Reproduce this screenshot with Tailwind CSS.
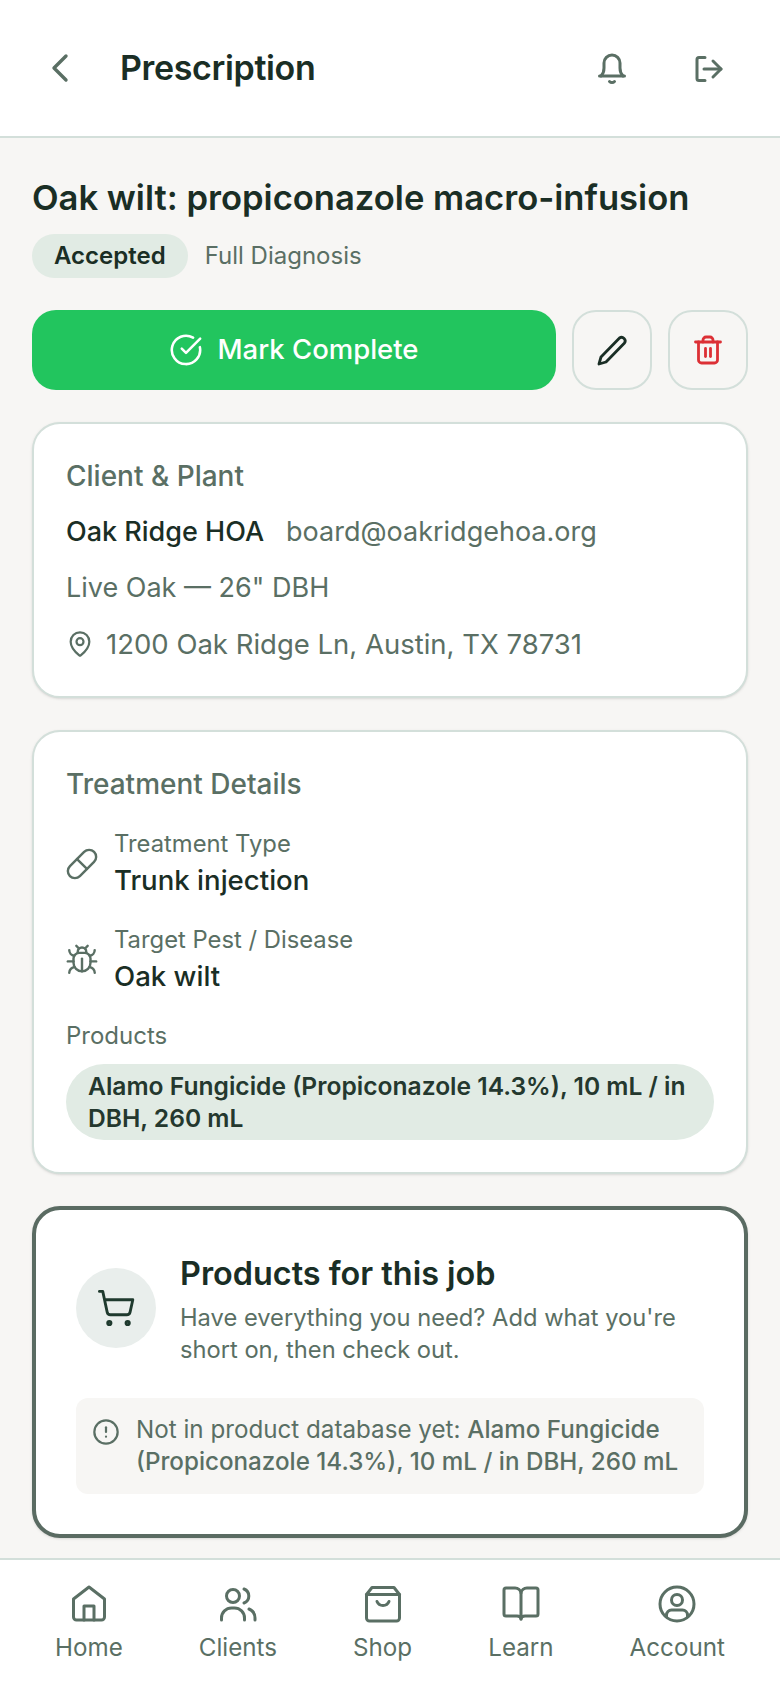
<!DOCTYPE html>
<html lang="en">
<head>
  <meta charset="UTF-8">
  <meta name="viewport" content="width=device-width, initial-scale=1.0">
  <title>Prescription</title>
  <script src="https://cdn.jsdelivr.net/npm/@tailwindcss/browser@4"></script>
</head>
<body class="font-['Inter',sans-serif] bg-[#f7f6f4] text-[#1a2e25] w-[780px] h-[1688px] flex flex-col overflow-hidden">

  <!-- header -->
  <header class="h-[138px] shrink-0 bg-white border-b-2 border-[#d3dfda] flex items-center pl-[38px] pr-[50px]">
    <svg class="w-[44px] h-[44px] text-[#5a6f64]" viewBox="0 0 44 44" fill="none" stroke="currentColor" stroke-width="3.4" stroke-linecap="round" stroke-linejoin="round"><path d="M28 10 16 22l12 12"/></svg>
    <h1 class="ml-[38px] text-[34px] leading-[48px] font-semibold tracking-[-0.35px] flex-1">Prescription</h1>
    <div class="flex gap-[52px]">
      <svg class="w-[44px] h-[44px] text-[#5a6f64]" viewBox="0 0 44 44" fill="none" stroke="currentColor" stroke-width="3" stroke-linecap="round" stroke-linejoin="round"><path d="M11 30c2-2 3-4 3-8v-5a8 8 0 0 1 16 0v5c0 4 1 6 3 8"/><path d="M9.5 30h25"/><path d="M19.5 35.5a3.5 3.5 0 0 0 5 0"/></svg>
      <svg class="w-[44px] h-[44px] text-[#5a6f64]" viewBox="0 0 44 44" fill="none" stroke="currentColor" stroke-width="3" stroke-linecap="round" stroke-linejoin="round"><path d="M19 11.5h-6a2 2 0 0 0-2 2v19a2 2 0 0 0 2 2h6"/><path d="M18 23h17"/><path d="m27 15 8 8-8 8"/></svg>
    </div>
  </header>

  <main class="flex-1 overflow-hidden px-[32px] pt-[35px]">
    <h2 class="text-[34.6px] leading-[48px] font-semibold whitespace-nowrap">Oak wilt: propiconazole macro-infusion</h2>
    <div class="mt-[13px] flex items-center gap-[17px]">
      <span class="h-[44px] px-[22px] rounded-full bg-[#e1ebe4] text-[24px] leading-[44px] font-semibold">Accepted</span>
      <span class="text-[24px] leading-[32px] text-[#5a6f64]">Full Diagnosis</span>
    </div>

    <div class="mt-[32px] flex gap-[16px]">
      <button class="flex-1 h-[80px] rounded-[24px] bg-[#22c55e] text-white flex items-center justify-center gap-[14px] text-[27.5px] font-medium">
        <svg class="w-[34px] h-[34px]" viewBox="0 0 24 24" fill="none" stroke="currentColor" stroke-width="1.8" stroke-linecap="round" stroke-linejoin="round"><path d="M21.8 10A10 10 0 1 1 17 3.3"/><path d="m9 11 3 3L22 4"/></svg>
        Mark Complete
      </button>
      <button class="w-[80px] h-[80px] rounded-[24px] border-2 border-[#d3dfda] flex items-center justify-center">
        <svg class="w-[32px] h-[32px] text-[#1a2e25]" viewBox="0 0 32 32" fill="none" stroke="currentColor" stroke-width="2.8" stroke-linecap="round" stroke-linejoin="round"><path d="M23.5 4a3.6 3.6 0 0 1 5 5L10 28l-7 2 2-7z"/></svg>
      </button>
      <button class="w-[80px] h-[80px] rounded-[24px] border-2 border-[#d3dfda] flex items-center justify-center">
        <svg class="w-[32px] h-[32px] text-[#dc3035]" viewBox="0 0 32 32" fill="none" stroke="currentColor" stroke-width="2.8" stroke-linecap="round" stroke-linejoin="round"><path d="M3.5 8h25"/><path d="M6.5 8v18a3 3 0 0 0 3 3h13a3 3 0 0 0 3-3V8"/><path d="M11 8V6a3 3 0 0 1 3-3h4a3 3 0 0 1 3 3v2"/><path d="M13.5 14.5v8"/><path d="M18.5 14.5v8"/></svg>
      </button>
    </div>

    <!-- client -->
    <section class="mt-[32px] bg-white border-2 border-[#d3dfda] rounded-[28px] shadow-sm p-[32px] flex flex-col gap-[16px] text-[27px] leading-[40px] text-[#5a6f64]">
      <h3 class="font-medium text-[#5a6f64] text-[28px]">Client &amp; Plant</h3>
      <p class="flex gap-[22px]"><span class="font-medium text-[#1a2e25]">Oak Ridge HOA</span><span>board@oakridgehoa.org</span></p>
      <p>Live Oak — 26" DBH</p>
      <p class="flex items-center gap-[12px] text-[27.5px]">
        <svg class="w-[28px] h-[28px]" viewBox="0 0 24 24" fill="none" stroke="currentColor" stroke-width="1.9" stroke-linecap="round" stroke-linejoin="round"><path d="M20 10c0 5-5.5 10.2-7.4 11.8a1 1 0 0 1-1.2 0C9.5 20.2 4 15 4 10a8 8 0 0 1 16 0"/><circle cx="12" cy="10" r="3"/></svg>
        1200 Oak Ridge Ln, Austin, TX 78731
      </p>
    </section>

    <!-- treatment -->
    <section class="mt-[32px] bg-white border-2 border-[#d3dfda] rounded-[28px] shadow-sm p-[32px]">
      <h3 class="font-medium text-[#5a6f64] text-[28px] leading-[40px]">Treatment Details</h3>
      <div class="mt-[24px] flex items-center gap-[15px] -ml-[1px]">
        <svg class="w-[34px] h-[34px] text-[#5a6f64]" viewBox="0 0 24 24" fill="none" stroke="currentColor" stroke-width="1.7" stroke-linecap="round" stroke-linejoin="round"><path d="m10.5 20.5 10-10a4.95 4.95 0 1 0-7-7l-10 10a4.95 4.95 0 1 0 7 7Z"/><path d="m8.5 8.5 7 7"/></svg>
        <div>
          <p class="text-[23.8px] leading-[32px] text-[#5a6f64]">Treatment Type</p>
          <p class="text-[27.6px] leading-[40px] font-medium">Trunk injection</p>
        </div>
      </div>
      <div class="mt-[24px] flex items-center gap-[15px] -ml-[1px]">
        <svg class="w-[34px] h-[34px] text-[#5a6f64]" viewBox="0 0 24 24" fill="none" stroke="currentColor" stroke-width="1.7" stroke-linecap="round" stroke-linejoin="round"><path d="m8 2 1.88 1.88"/><path d="M14.12 3.88 16 2"/><path d="M9 7.13v-1a3 3 0 1 1 6 0v1"/><path d="M12 20c-3.3 0-6-2.7-6-6v-3a4 4 0 0 1 4-4h4a4 4 0 0 1 4 4v3c0 3.3-2.7 6-6 6"/><path d="M12 20v-9"/><path d="M6.53 9C4.6 8.8 3 7.1 3 5"/><path d="M6 13H2"/><path d="M3 21c0-2.1 1.7-3.9 3.8-4"/><path d="M20.97 5c0 2.1-1.6 3.8-3.5 4"/><path d="M22 13h-4"/><path d="M17.2 17c2.1.1 3.8 1.9 3.8 4"/></svg>
        <div>
          <p class="text-[23.8px] leading-[32px] text-[#5a6f64]">Target Pest / Disease</p>
          <p class="text-[27.6px] leading-[40px] font-medium">Oak wilt</p>
        </div>
      </div>
      <p class="mt-[24px] text-[24px] leading-[32px] text-[#5a6f64]">Products</p>
      <p class="mt-[12px] px-[22px] py-[6px] rounded-[38px] bg-[#e1ebe4] text-[24.6px] leading-[32px] font-semibold text-[#24382e]">Alamo Fungicide (Propiconazole 14.3%), 10 mL / in DBH, 260 mL</p>
    </section>

    <!-- products -->
    <section class="mt-[32px] bg-white border-4 border-[#5a6b62] rounded-[28px] shadow-sm p-[40px]">
      <div class="flex items-center gap-[24px]">
        <div class="w-[80px] h-[80px] shrink-0 rounded-full bg-[#e9eeec] flex items-center justify-center">
          <svg class="w-[40px] h-[40px] text-[#1f3a2e]" viewBox="0 0 24 24" fill="none" stroke="currentColor" stroke-width="1.7" stroke-linecap="round" stroke-linejoin="round"><circle cx="8" cy="21" r="1"/><circle cx="19" cy="21" r="1"/><path d="M2.05 2.05h2l2.66 12.42a2 2 0 0 0 2 1.58h9.78a2 2 0 0 0 1.95-1.57l1.65-7.43H5.12"/></svg>
        </div>
        <div>
          <h3 class="text-[32.4px] leading-[48px] font-semibold">Products for this job</h3>
          <p class="mt-[4px] text-[23.7px] leading-[32px] text-[#5a6f64]">Have everything you need? Add what you're short on, then check out.</p>
        </div>
      </div>
      <div class="mt-[32px] rounded-[12px] bg-[#f7f6f4] p-[16px] flex gap-[16px] text-[24.2px] leading-[32px] text-[#5a6f64]">
        <svg class="w-[28px] h-[28px] mt-[4px] shrink-0" viewBox="0 0 24 24" fill="none" stroke="currentColor" stroke-width="1.9" stroke-linecap="round" stroke-linejoin="round"><circle cx="12" cy="12" r="10"/><path d="M12 8v4"/><path d="M12 16h.01"/></svg>
        <p>Not in product database yet: <span class="font-medium">Alamo Fungicide (Propiconazole 14.3%), 10 mL / in DBH, 260 mL</span></p>
      </div>
    </section>
  </main>

  <!-- tabs -->
  <nav class="h-[130px] shrink-0 bg-white border-t-2 border-[#d3dfda] px-[17px] pt-[22px] flex justify-around items-start text-[24.2px] leading-[32px] text-[#5a6f64]">
    <a class="flex flex-col items-center gap-[6px]">
      <svg class="w-[44px] h-[44px]" viewBox="0 0 44 44" fill="none" stroke="currentColor" stroke-width="3" stroke-linecap="round" stroke-linejoin="round"><path d="M6.5 17 22 5l15.5 12v18a3 3 0 0 1-3 3h-25a3 3 0 0 1-3-3z"/><path d="M17 38V24h10v14"/></svg>
      Home
    </a>
    <a class="flex flex-col items-center gap-[6px]">
      <svg class="w-[44px] h-[44px]" viewBox="0 0 44 44" fill="none" stroke="currentColor" stroke-width="3" stroke-linecap="round" stroke-linejoin="round"><circle cx="17" cy="14" r="6.5"/><path d="M28 7a7.5 7.5 0 0 1 0 14"/><path d="M5.5 38v-2a10 10 0 0 1 10-10h3a10 10 0 0 1 10 10v2"/><path d="M33 27c3.5 1.5 6 5 6 9v2"/></svg>
      Clients
    </a>
    <a class="flex flex-col items-center gap-[6px]">
      <svg class="w-[44px] h-[44px]" viewBox="0 0 44 44" fill="none" stroke="currentColor" stroke-width="3" stroke-linecap="round" stroke-linejoin="round"><path d="M11 5.5h22l5.5 7V36a3 3 0 0 1-3 3h-27a3 3 0 0 1-3-3V12.5z"/><path d="M5.5 12.5h33"/><path d="M16 19.5a6.5 6.5 0 0 0 12 0"/></svg>
      Shop
    </a>
    <a class="flex flex-col items-center gap-[6px]">
      <svg class="w-[44px] h-[44px]" viewBox="0 0 44 44" fill="none" stroke="currentColor" stroke-width="3" stroke-linecap="round" stroke-linejoin="round"><path d="M22 11a6 6 0 0 0-6-5H7a2 2 0 0 0-2 2v24a2 2 0 0 0 2 2h11c2 0 4 1 4 3 0-2 2-3 4-3h11a2 2 0 0 0 2-2V8a2 2 0 0 0-2-2H28a6 6 0 0 0-6 5z"/><path d="M22 11v26"/></svg>
      Learn
    </a>
    <a class="flex flex-col items-center gap-[6px]">
      <svg class="w-[44px] h-[44px]" viewBox="0 0 44 44" fill="none" stroke="currentColor" stroke-width="3" stroke-linecap="round" stroke-linejoin="round"><circle cx="22" cy="22" r="17"/><circle cx="22" cy="18" r="5.5"/><path d="M11.5 34.5V33a5 5 0 0 1 5-5h11a5 5 0 0 1 5 5v1.5"/></svg>
      Account
    </a>
  </nav>
</body>
</html>
